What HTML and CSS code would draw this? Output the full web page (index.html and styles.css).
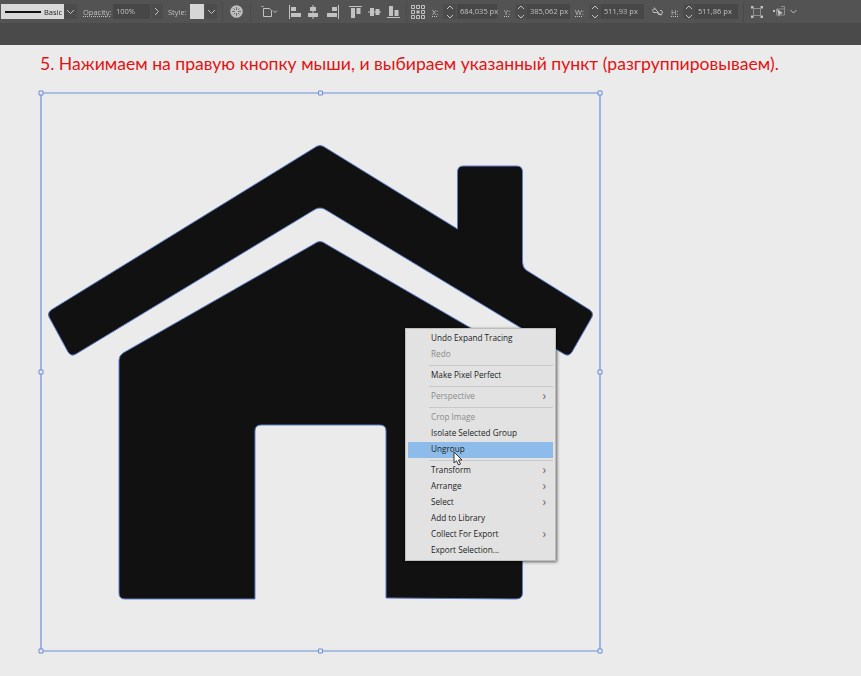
FILE: index.html
```html
<!DOCTYPE html>
<html lang="ru">
<head>
  <meta charset="UTF-8">
  <title>Разгруппировка</title>
  <meta name="viewport" content="width=device-width, initial-scale=1.0">
  <link rel="stylesheet" href="styles.css">
</head>
<body>
  <header class="toolbar">
    <div class="stroke-box"><span class="stroke-line"></span><span>Basic</span></div>
    <div class="btn chevron-btn"><svg width="9" height="6" viewBox="0 0 9 6"><path d="M1 1l3.500 3.500L8 1"/></svg></div>
    <span class="label opacity-label">Opacity:</span>
    <div class="field opacity-field">100%</div>
    <div class="btn arrow-btn"><svg width="6" height="9" viewBox="0 0 6 9"><path d="M1 1l3.500 3.500L1 8"/></svg></div>
    <span class="label style-label">Style:</span>
    <div class="swatch"></div>
    <div class="btn style-btn"><svg width="9" height="6" viewBox="0 0 9 6"><path d="M1 1l3.500 3.500L8 1"/></svg></div>
    <span class="sep sep-a"></span>
    <svg class="icon globe" width="13" height="13" viewBox="0 0 13 13">
      <circle class="disc" cx="6.500" cy="6.500" r="6.300"/>
      <path class="dark-line" d="M6.500 2v3M6.500 8v3M2 6.500h3M8 6.500h3M3.500 3.500l1.500 1.500M8 8l1.500 1.500M9.500 3.500L8 5M5 8L3.500 9.500"/>
    </svg>
    <span class="sep sep-b"></span>
    <svg class="icon artboard" width="18" height="13" viewBox="0 0 18 13">
      <path d="M1.500 1.500h2M3.500 3.500h6l2 2v6h-8z"/><path d="M13 5.500l2 2 2-2"/>
    </svg>
    <svg class="icon align-a" width="12" height="14" viewBox="0 0 12 14"><path class="bar" d="M0 0h1v14H0zM2 2h5v4H2zM2 8h10v4H2z"/></svg>
    <svg class="icon align-b" width="12" height="14" viewBox="0 0 12 14"><path class="bar" d="M5.500 0h1v14h-1zM3 2h6v4H3zM1 8h10v4H1z"/></svg>
    <svg class="icon align-b2" width="12" height="14" viewBox="0 0 12 14"><path class="bar" d="M11 0h1v14h-1zM5 2h5v4H5zM0 8h10v4H0z"/></svg>
    <svg class="icon align-c" width="13" height="12" viewBox="0 0 13 12"><path class="bar" d="M0 0h13v1H0zM2 2h4v10H2zM7.500 2h4v6h-4z"/></svg>
    <svg class="icon align-d" width="13" height="12" viewBox="0 0 13 12"><path class="bar" d="M0 5.500h13v1H0zM2 2h4v8H2zM7.500 3h4v6h-4z"/></svg>
    <svg class="icon align-d" width="13" height="12" viewBox="0 0 13 12"><path class="bar" d="M0 11h13v1H0zM2 0h4v10H2zM7.500 4h4v6h-4z"/></svg>
    <span class="sep sep-c"></span>
    <svg class="icon grid" width="14" height="14" viewBox="0 0 14 14">
      <path d="M.5.500h3v3h-3zM5.500.500h3v3h-3zM10.500.500h3v3h-3zM.5 5.500h3v3h-3zM10.500 5.500h3v3h-3zM.5 10.500h3v3h-3zM5.500 10.500h3v3h-3zM10.500 10.500h3v3h-3z"/>
      <path class="bar" d="M5.500 5.500h3v3h-3z"/>
    </svg>
    <span class="label coord-x">X:</span>
    <div class="btn stepper step-x"><svg width="8" height="14" viewBox="0 0 8 14"><path d="M1 4l3-3 3 3M1 10l3 3 3-3"/></svg></div>
    <div class="field coord-field xf">684,035 px</div>
    <span class="label coord-y">Y:</span>
    <div class="btn stepper"><svg width="8" height="14" viewBox="0 0 8 14"><path d="M1 4l3-3 3 3M1 10l3 3 3-3"/></svg></div>
    <div class="field coord-field">385,062 px</div>
    <span class="label coord-w">W:</span>
    <div class="btn stepper"><svg width="8" height="14" viewBox="0 0 8 14"><path d="M1 4l3-3 3 3M1 10l3 3 3-3"/></svg></div>
    <div class="field coord-field">511,93 px</div>
    <svg class="icon link" width="11" height="9" viewBox="0 0 11 9"><path d="M3 2H1.500L.5 3.500l1 2h3L6 4M8 3.500h1.500l1 1.500-1 2.500h-3L5 5M2 .5l7 8"/></svg>
    <span class="label coord-h">H:</span>
    <div class="btn stepper"><svg width="8" height="14" viewBox="0 0 8 14"><path d="M1 4l3-3 3 3M1 10l3 3 3-3"/></svg></div>
    <div class="field coord-field">511,86 px</div>
    <span class="sep sep-d"></span>
    <svg class="icon transform" width="12" height="12" viewBox="0 0 12 12"><path class="faint" d="M2.500 2.500h7v7h-7z"/><path class="bar" d="M0 0h2.500v2.500H0zM9.500 0H12v2.500H9.500zM0 9.500h2.500V12H0zM9.500 9.500H12V12H9.500z"/></svg>
    <svg class="icon shape" width="12" height="12" viewBox="0 0 12 12"><path class="faint" d="M3.500 3h8v6h-8zM8 .5h3.500V3"/><path class="bar" d="M0 4h2v2H0zM4 3l6 4-3 1-1 3z"/></svg>
    <svg class="icon more" width="7" height="5" viewBox="0 0 7 5"><path d="M.5 1l3 3 3-3"/></svg>
  </header>
  <div class="subbar"></div>

  <main class="canvas">
    <h1 class="step">5. Нажимаем на правую кнопку мыши, и выбираем указанный пункт (разгруппировываем).</h1>

    <svg class="art" width="580" height="580" viewBox="30 83 580 580">
      <path class="house" d="M314 148Q320 143 326 148L457.500 229V172Q457.500 166 463 166H517Q522.500 166 522.500 172V262Q522.500 267 526 270L590 310Q594 313 592 317L572 352Q569 357 564 354L326 210Q320 206 314 210L76 354Q71 357 68 352L49 317Q47 313 51 310Z"/>
      <path class="house" d="M314 244Q320 239 326 244L522.500 358V593Q522.500 599 516 599L386 598V431Q386 425 380 425H261Q255 425 255 431V599H125Q119 599 119 593V360Q119 356 123 353Z"/>
      <path class="bounds" d="M41 93H600V651H41Z"/>
      <path class="handle" d="M39 91h4v4h-4zM318.500 91h4v4h-4zM598 91h4v4h-4zM39 370h4v4h-4zM598 370h4v4h-4zM39 649h4v4h-4zM318.500 649h4v4h-4zM598 649h4v4h-4z"/>
    </svg>

    <ul class="menu">
      <li class="item">Undo Expand Tracing</li>
      <li class="item off">Redo</li>
      <li class="divider"></li>
      <li class="item">Make Pixel Perfect</li>
      <li class="divider"></li>
      <li class="item off has-sub">Perspective<span class="sub">›</span></li>
      <li class="divider"></li>
      <li class="item off">Crop Image</li>
      <li class="item">Isolate Selected Group</li>
      <li class="item active">Ungroup</li>
      <li class="divider"></li>
      <li class="item has-sub">Transform<span class="sub">›</span></li>
      <li class="item has-sub">Arrange<span class="sub">›</span></li>
      <li class="item has-sub">Select<span class="sub">›</span></li>
      <li class="item">Add to Library</li>
      <li class="item has-sub">Collect For Export<span class="sub">›</span></li>
      <li class="item">Export Selection...</li>
    </ul>

    <svg class="cursor" width="11" height="15" viewBox="0 0 11 15">
      <path d="M1 1v11l2.500-2.200L5.500 14l2-1-2-4h3.500z"/>
    </svg>
  </main>
</body>
</html>
```

FILE: styles.css
```css
:root {
  --bar: #535353;
  --bar-dark: #4a4a4a;
  --field: #474747;
  --bar-text: #c0c0c0;
  --icon: #c2c2c2;
  --canvas: #ebebeb;
  --select: #6d8fdc;
  --menu: #e2e2e2;
}

html, body {
  margin: 0;
  padding: 0;
  height: 100%;
  overflow: hidden;
}

body {
  background: var(--canvas);
  font-family: "Open Sans", "Liberation Sans", sans-serif;
}

/* top option bar */
.toolbar {
  display: flex;
  align-items: center;
  height: 23px;
  padding-left: 1px;
  background: var(--bar);
  color: var(--bar-text);
  font-size: 7.500px;
  white-space: nowrap;
  filter: blur(0.45px);
}

.subbar {
  height: 22px;
  background: var(--bar-dark);
}

.stroke-box {
  display: flex;
  align-items: center;
  box-sizing: border-box;
  width: 63px;
  height: 15px;
  padding-left: 4px;
  background: #d8d8d8;
  color: #222;
}

.stroke-line {
  width: 36px;
  height: 2px;
  margin-right: 3px;
  background: #111;
}

.btn {
  display: flex;
  align-items: center;
  justify-content: center;
  height: 15px;
  background: #4c4c4c;
}

.btn svg, .icon {
  flex: none;
  fill: none;
  stroke: var(--icon);
  stroke-width: 1;
}

.icon .bar {
  fill: var(--icon);
  stroke: none;
}

.icon .faint {
  stroke: #8f8f8f;
}

.icon .disc {
  fill: #bdbdbd;
  stroke: none;
}

.icon .dark-line {
  stroke: #6e6e6e;
}

.chevron-btn { width: 13px; }
.arrow-btn { width: 12px; margin-left: 1px; }
.style-btn { width: 12px; margin-left: 1px; }

.label {
  flex: none;
  color: var(--bar-text);
}

.opacity-label { width: 26px; margin-left: 6px; text-decoration: underline dotted; }
.style-label { width: 18px; margin-left: 5px; }

.field {
  flex: none;
  box-sizing: border-box;
  height: 15px;
  padding-left: 3px;
  line-height: 15px;
  background: var(--field);
}

.opacity-field { width: 37px; margin-left: 4px; }

.swatch {
  width: 14px;
  height: 15px;
  margin-left: 4px;
  background: #d6d6d6;
}

.sep {
  flex: none;
  width: 1px;
  height: 20px;
  background: #4a4a4a;
}

.sep-a { margin-left: 5px; }
.globe { margin-left: 7px; }
.sep-b { margin-left: 7px; }
.artboard { margin-left: 9px; }
.align-a { margin-left: 11px; }
.align-b { margin-left: 6px; }
.align-b2 { margin-left: 8px; }
.align-c { margin-left: 10px; }
.align-d { margin-left: 6px; }
.sep-c { margin-left: 6px; }
.grid { margin-left: 4px; }

.stepper { width: 12px; flex: none; }
.coord-field { width: 43px; }
.xf { width: 40px; margin-left: 1px; }
.coord-x { width: 7px; margin-left: 7px; text-decoration: underline dotted; }
.step-x { width: 13px; margin-left: 4px; }
.coord-y { width: 7px; margin-left: 7px; margin-right: 4px; text-decoration: underline dotted; }
.coord-w { width: 10px; margin-left: 5px; margin-right: 4px; text-decoration: underline dotted; }
.link { margin-left: 8px; }
.coord-h { width: 9px; margin-left: 8px; margin-right: 3px; text-decoration: underline dotted; }
.sep-d { margin-left: 5px; }
.transform { margin-left: 7px; }
.shape { margin-left: 10px; }
.more { margin-left: 5px; }

/* artboard */
.canvas {
  position: relative;
  height: 631px;
}

.step {
  margin: 0;
  padding: 7px 0 0 40px;
  height: 31px;
  box-sizing: border-box;
  color: #e01414;
  font-family: "Lato", "Open Sans", sans-serif;
  font-size: 17.600px;
  font-weight: 400;
  line-height: 23px;
  white-space: nowrap;
}

.art {
  display: block;
  margin: 7px 0 0 30px;
}

.house {
  fill: #111;
  stroke: #5c7cc8;
  stroke-width: 1;
}

.bounds {
  fill: none;
  stroke: var(--select);
  stroke-width: 1.200;
}

.handle {
  fill: var(--canvas);
  stroke: var(--select);
  stroke-width: 1;
}

/* context menu */
.menu {
  position: absolute;
  left: 405px;
  top: 283px;
  box-sizing: border-box;
  width: 151px;
  height: 233px;
  margin: 0;
  padding: 2px 2px 0;
  list-style: none;
  background: var(--menu);
  border: 1px solid #bdbdbd;
  box-shadow: 1px 1px 3px rgba(0, 0, 0, 0.6);
  color: #1c1c1c;
  font-size: 8.200px;
}

.item {
  display: flex;
  justify-content: space-between;
  height: 16px;
  padding: 0 7px 0 23px;
  line-height: 14px;
}

.off {
  color: #8b8b8b;
}

.active {
  background: #8dbcea;
}

.divider {
  height: 1px;
  margin: 2px 0 2px 21px;
  background: #c8c8c8;
}

.sub {
  font-size: 12px;
  line-height: 13px;
  color: #666;
}

.cursor {
  position: absolute;
  left: 453px;
  top: 406px;
  fill: #fff;
  stroke: #333;
  stroke-width: 1;
}
```
